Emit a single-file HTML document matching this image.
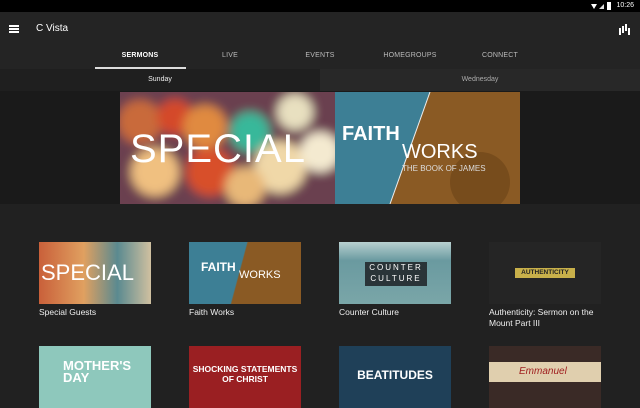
<!DOCTYPE html>
<html><head><meta charset="utf-8"><style>
*{margin:0;padding:0;box-sizing:border-box}
body{width:640px;height:400px;overflow:hidden;background:#212121;font-family:"Liberation Sans",sans-serif;color:#fff;position:relative}
.abs{position:absolute}
.tab{position:absolute;top:52px;font-size:7px;color:#bbb;transform:translateX(-50%);letter-spacing:.2px}
.th{position:absolute;width:112px;height:62px;overflow:hidden}
.lb{position:absolute;font-size:8.5px;color:#eee;width:120px;line-height:11px}
</style></head><body>
<div class="abs" style="left:0;top:0;width:640px;height:12px;background:#000"></div>
<div class="abs" style="right:6px;top:2px;font-size:7px;color:#fff">10:26</div>
<div class="abs" style="left:591px;top:4px;width:0;height:0;border-left:3px solid transparent;border-right:3px solid transparent;border-top:5px solid #fff"></div>
<div class="abs" style="left:599px;top:4px;width:0;height:0;border-left:5px solid transparent;border-bottom:5px solid #ddd"></div>
<div class="abs" style="left:607px;top:2px;width:4px;height:8px;background:#fff"></div>
<div class="abs" style="left:0;top:12px;width:640px;height:57px;background:#242424"></div>
<div class="abs" style="left:9px;top:25px;width:10px;height:1.5px;background:#fff;box-shadow:0 3px #fff,0 6px #fff"></div>
<div class="abs" style="left:36px;top:23px;font-size:10px">C Vista</div>
<div class="abs" style="left:622px;top:26px;width:2px;height:7px;background:#fff;box-shadow:3px -2px #fff,6px 2px #fff,-3px 2px #fff"></div>
<div class="tab" style="left:140px;color:#fff;font-weight:bold">SERMONS</div>
<div class="tab" style="left:230px">LIVE</div>
<div class="tab" style="left:320px">EVENTS</div>
<div class="tab" style="left:410px">HOMEGROUPS</div>
<div class="tab" style="left:500px">CONNECT</div>
<div class="abs" style="left:95px;top:67px;width:91px;height:2px;background:#ddd"></div>
<div class="abs" style="left:0;top:69px;width:320px;height:22px;background:#1f1f1f"></div>
<div class="abs" style="left:320px;top:69px;width:320px;height:22px;background:#282828"></div>
<div class="abs" style="left:160px;top:76px;font-size:7px;transform:translateX(-50%);color:#eee">Sunday</div>
<div class="abs" style="left:480px;top:76px;font-size:7px;transform:translateX(-50%);color:#aaa">Wednesday</div>
<div class="abs" style="left:0;top:91px;width:640px;height:113px;background:#1a1a1a"></div>
<svg class="abs" style="left:120px;top:92px" width="400" height="112" viewBox="0 0 400 112">
<defs><filter id="b"><feGaussianBlur stdDeviation="5"/></filter></defs>
<rect width="400" height="112" fill="#1e3a6a"/>
<rect x="0" y="0" width="220" height="112" fill="#7a4a48"/>
<g filter="url(#b)">
<rect x="-10" y="-10" width="240" height="132" fill="#6a4050"/>
<circle cx="20" cy="30" r="22" fill="#c96a3a"/><circle cx="55" cy="25" r="18" fill="#d44a2a"/>
<circle cx="85" cy="35" r="22" fill="#e08a40"/><circle cx="35" cy="80" r="24" fill="#f0c080"/>
<circle cx="90" cy="80" r="24" fill="#d8502a"/><circle cx="130" cy="40" r="20" fill="#38b89a"/>
<circle cx="175" cy="20" r="18" fill="#e8e0c0"/><circle cx="160" cy="75" r="26" fill="#f0d8a8"/>
<circle cx="125" cy="95" r="20" fill="#e8b878"/><circle cx="200" cy="60" r="20" fill="#f4ead0"/>
</g>
<polygon points="215,0 310,0 270,112 215,112" fill="#3d7f95"/>
<polygon points="310,0 400,0 400,112 270,112" fill="#8a5a24"/>
<circle cx="360" cy="90" r="30" fill="#6a4218" opacity=".6"/>
<line x1="310" y1="0" x2="270" y2="112" stroke="#eee" stroke-width="1"/>
<text x="10" y="70" font-family="Liberation Sans" font-size="40" fill="#fff" font-weight="100" letter-spacing="1">SPECIAL</text>
<text x="222" y="48" font-family="Liberation Sans" font-size="20" font-weight="bold" fill="#fff">FAITH</text>
<text x="282" y="66" font-family="Liberation Sans" font-size="20" fill="#fff">WORKS</text>
<text x="282" y="79" font-family="Liberation Sans" font-size="8" fill="#ddd">THE BOOK OF JAMES</text>
</svg>

<div class="th" style="left:39px;top:242px;background:linear-gradient(90deg,#c9603a,#e0a060 40%,#5a8a90 70%,#d0c0a0)"><div style="position:absolute;left:2px;top:18px;font-size:22px;color:#fff;font-weight:100">SPECIAL</div></div>
<div class="th" style="left:189px;top:242px;background:linear-gradient(105deg,#3d7f95 45%,#8a5a24 46%)"><div style="position:absolute;left:12px;top:18px;font-size:12px;font-weight:bold">FAITH</div><div style="position:absolute;left:50px;top:27px;font-size:11px">WORKS</div></div>
<div class="th" style="left:339px;top:242px;background:linear-gradient(#b8d0d0,#6a9aa0 30%,#7aa6a8)"><div style="position:absolute;left:26px;top:20px;width:62px;height:24px;background:#2a3438;font-size:8px;text-align:center;letter-spacing:2px;line-height:11px">COUNTER<br>CULTURE</div></div>
<div class="th" style="left:489px;top:242px;background:#252525"><div style="position:absolute;left:26px;top:26px;width:60px;height:10px;background:#c8b04a;color:#222;font-size:6.5px;font-weight:bold;text-align:center;line-height:10px">AUTHENTICITY</div></div>
<div class="lb" style="left:39px;top:307px">Special Guests</div>
<div class="lb" style="left:189px;top:307px">Faith Works</div>
<div class="lb" style="left:339px;top:307px">Counter Culture</div>
<div class="lb" style="left:489px;top:307px">Authenticity: Sermon on the Mount Part III</div>

<div class="th" style="left:39px;top:346px;background:#8ec8bc"><div style="position:absolute;left:24px;top:14px;font-size:13px;font-weight:bold;line-height:12px">MOTHER'S<br>DAY</div></div>
<div class="th" style="left:189px;top:346px;background:#9a1f22"><div style="position:absolute;left:0;width:112px;top:18px;font-size:8.5px;font-weight:bold;text-align:center;line-height:10px">SHOCKING STATEMENTS<br>OF CHRIST</div></div>
<div class="th" style="left:339px;top:346px;background:#1f4058"><div style="position:absolute;left:0;width:112px;top:22px;font-size:12px;font-weight:bold;text-align:center">BEATITUDES</div></div>
<div class="th" style="left:489px;top:346px;background:#3a2a26"><div style="position:absolute;left:0;top:16px;width:112px;height:20px;background:#e0cfae"></div><div style="position:absolute;left:30px;top:20px;font-size:10px;color:#a02020;font-style:italic">Emmanuel</div></div>
</body></html>
